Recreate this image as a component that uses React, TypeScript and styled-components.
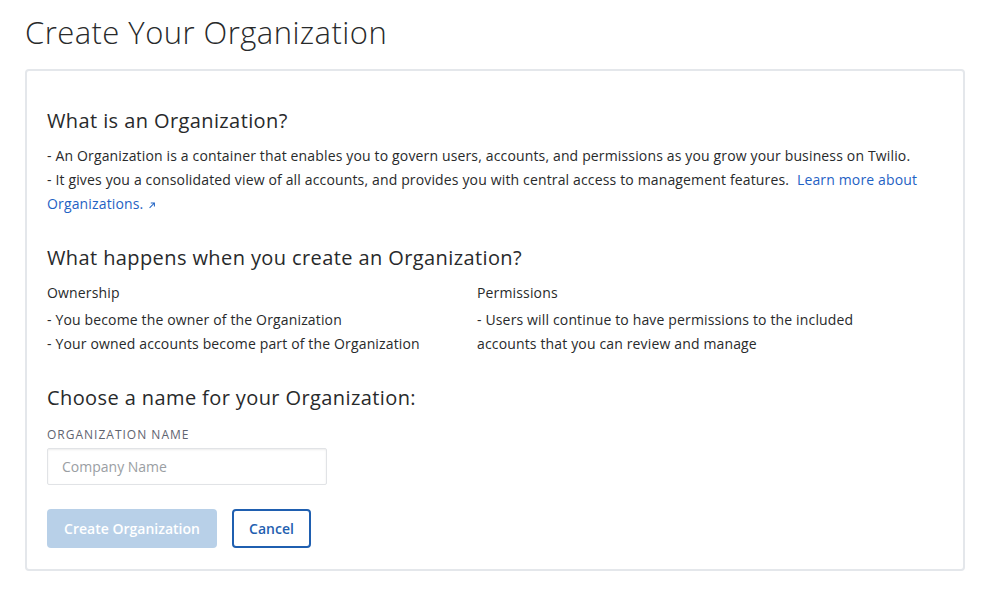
import React from "react";
import styled, { createGlobalStyle } from "styled-components";

const Global = createGlobalStyle`
  html, body { margin: 0; padding: 0; background: #ffffff; }
  body { font-family: "Open Sans", "Noto Sans", sans-serif; color: #282a2b; }
  * { box-sizing: border-box; }
`;

const Page = styled.div`
  padding: 14px 23px 24px 25px;
  width: 987px;
`;

const Title = styled.h1`
  margin: 0 0 19px 0;
  font-size: 31px;
  font-weight: 300;
  line-height: 36px;
  letter-spacing: 0.45px;
  color: #282a2b;
`;

const Card = styled.section`
  border: 2px solid #e4e7eb;
  border-radius: 4px;
  padding: 36px 20px 21px 20px;
  width: 940px;
`;

const Heading = styled.h2`
  margin: 0 0 9px 0;
  font-size: 20px;
  font-weight: 400;
  line-height: 28px;
  letter-spacing: 0.4px;
  color: #282a2b;
`;

const Section = styled.div`
  margin-bottom: 28px;
`;

const Line = styled.p`
  margin: 0;
  font-size: 14px;
  line-height: 24px;
  letter-spacing: 0.15px;
  color: #282a2b;
`;

const Link = styled.a`
  color: #1f62c4;
  text-decoration: none;
  margin-left: 4px;
`;

const Columns = styled.div`
  display: grid;
  grid-template-columns: 430px 1fr;
`;

const ColTitle = styled.div`
  font-size: 14px;
  line-height: 24px;
  letter-spacing: 0.15px;
  margin-bottom: 3px;
`;

const Label = styled.label`
  display: block;
  font-size: 12px;
  line-height: 16px;
  letter-spacing: 1px;
  font-weight: 400;
  text-transform: uppercase;
  color: #5f6470;
  margin: 15px 0 5px 0;
`;

const Input = styled.input`
  width: 280px;
  height: 37px;
  border: 1px solid #e1e3e6;
  border-radius: 2px;
  box-shadow: inset 0 1px 2px rgba(0, 0, 0, 0.08);
  padding: 0 14px;
  font-family: inherit;
  font-size: 14px;
  color: #282a2b;
  outline: none;
  &::placeholder { color: #9a9ea3; }
`;

const Actions = styled.div`
  display: flex;
  gap: 15px;
  margin-top: 24px;
`;

const Button = styled.button<{ $variant: "primary" | "secondary" }>`
  height: 39px;
  padding: 0 10px;
  border-radius: 4px;
  font-family: inherit;
  font-size: 14px;
  font-weight: 600;
  cursor: pointer;
  background: ${(p) => (p.$variant === "primary" ? "#b8d0e8" : "#ffffff")};
  color: ${(p) => (p.$variant === "primary" ? "#ffffff" : "#1f5fb0")};
  border: ${(p) => (p.$variant === "primary" ? "none" : "2px solid #1f5fb0")};
  width: ${(p) => (p.$variant === "primary" ? "170px" : "79px")};
`;

const ExtIcon = () => (
  <svg width="8" height="8" viewBox="0 0 10 10" style={{ marginLeft: 5 }}>
    <path d="M2 8.5 L8 2.5 M3.5 2.5 H8 V7" stroke="#1f62c4" strokeWidth="1.3" fill="none" />
  </svg>
);

export default function App() {
  return (
    <Page>
      <Global />
      <Title>Create Your Organization</Title>
      <Card>
        <Section>
          <Heading>What is an Organization?</Heading>
          <Line>
            - An Organization is a container that enables you to govern users, accounts, and permissions as you grow your business on Twilio.
          </Line>
          <Line>
            - It gives you a consolidated view of all accounts, and provides you with central access to management features.{" "}
            <Link href="#">
              Learn more about Organizations.
              <ExtIcon />
            </Link>
          </Line>
        </Section>
        <Section>
          <Heading>What happens when you create an Organization?</Heading>
          <Columns>
            <div>
              <ColTitle>Ownership</ColTitle>
              <Line>- You become the owner of the Organization</Line>
              <Line>- Your owned accounts become part of the Organization</Line>
            </div>
            <div>
              <ColTitle>Permissions</ColTitle>
              <Line>
                - Users will continue to have permissions to the included
                <br />
                accounts that you can review and manage
              </Line>
            </div>
          </Columns>
        </Section>
        <Heading>Choose a name for your Organization:</Heading>
        <Label>Organization Name</Label>
        <Input placeholder="Company Name" />
        <Actions>
          <Button $variant="primary">Create Organization</Button>
          <Button $variant="secondary">Cancel</Button>
        </Actions>
      </Card>
    </Page>
  );
}
